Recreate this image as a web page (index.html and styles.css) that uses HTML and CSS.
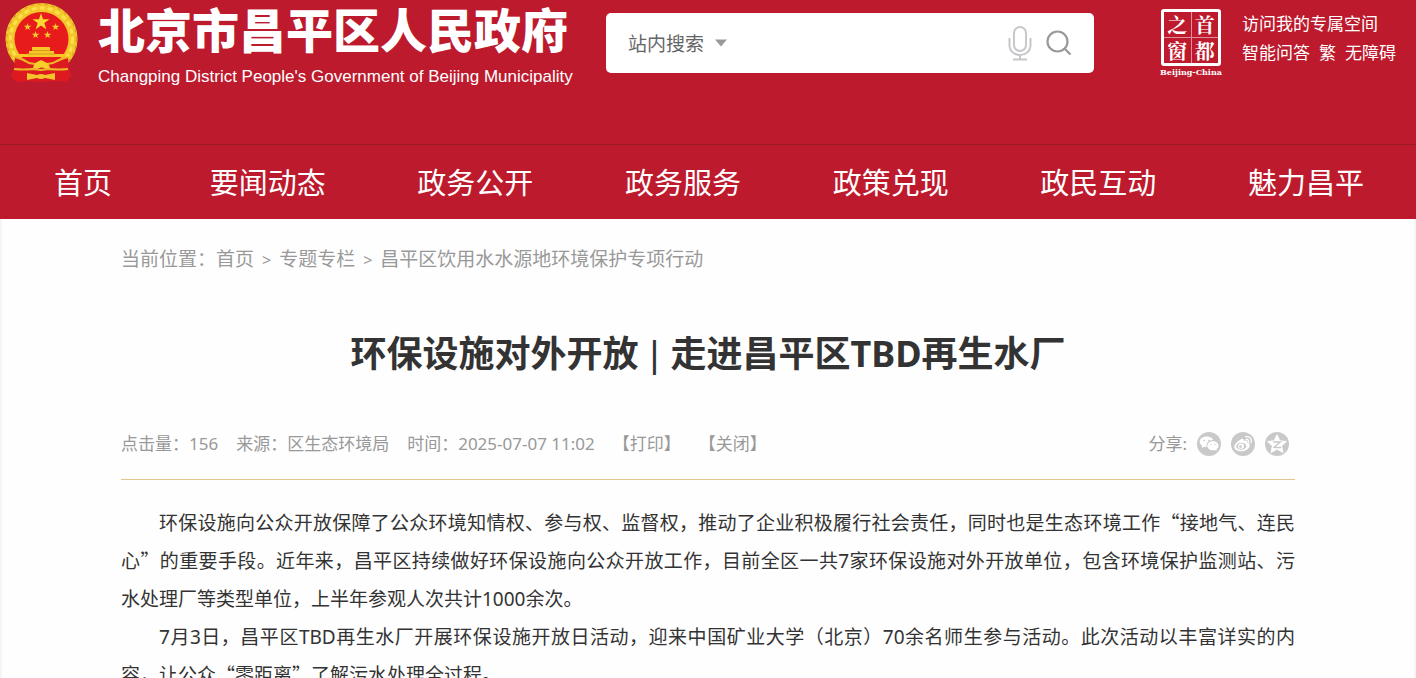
FILE: index.html
```html
<!DOCTYPE html>
<html lang="zh-CN">
<head>
<meta charset="utf-8">
<title>环保设施对外开放 | 走进昌平区TBD再生水厂</title>
<link rel="stylesheet" href="styles.css">
</head>
<body>
<header class="site-header">
  <div class="top">
    <a class="brand" href="#">
      <svg class="emblem" viewBox="0 0 74 82" aria-hidden="true">
        <circle cx="36.500" cy="37" r="30.500" fill="none" stroke="#f3c62a" stroke-width="11"/>
        <circle cx="36.500" cy="37" r="31" fill="none" stroke="#fbe04a" stroke-width="3" stroke-dasharray="5 3"/>
        <circle cx="36.500" cy="37" r="35" fill="none" stroke="#d9a324" stroke-width="1.500" stroke-dasharray="3 4"/>
        <circle cx="36.500" cy="37" r="27" fill="#e81b1c"/>
        <path d="M36 11l2 6.200h6.500l-5.200 3.800 2 6.200-5.300-3.800-5.300 3.800 2-6.200-5.200-3.800h6.500z" fill="#f9d92f"/>
        <g fill="#f5cc2c">
          <path id="star" d="M22.500 21l.9 2.700h2.900l-2.300 1.700.9 2.700-2.400-1.700-2.300 1.700.9-2.700-2.300-1.700h2.800z"/>
          <use href="#star" x="28"/><use href="#star" x="8" y="8"/><use href="#star" x="20" y="8"/>
        </g>
        <path d="M27 45h18v4h4v3h10v3H13v-3h11v-3h3z" fill="#f6c726"/>
        <path d="M27 48.500h18M22 52h28" stroke="#d89a1c"/>
        <path d="M10 56q8-1 14 4l12 2 12-2q6-5 15-4l1 10 2 8-5 6-12-1-13 1-13-1-12 1-5-6 3-8z" fill="#dc1a20"/>
        <path d="M10 55q8 2 14 6l12 2 12-2q7-4 15-6M9 67q9 1 19 0l8 1 8-1q10 1 19 0" fill="none" stroke="#edb626" stroke-width="2"/>
        <path d="M28 66q1-5 4-6l4-2 4 2q4 1 5 6l-4 1q-4-3-9 0z" fill="#f6cf2b"/>
        <path d="M22 71l10 2q4-2 8 0l10-2v7l-10-2q-4 2-8 0l-10 2z" fill="#f3c52a"/>
      </svg>
      <span class="brand-text">
        <span class="brand-cn">北京市昌平区人民政府</span>
        <span class="brand-en">Changping District People's Government of Beijing Municipality</span>
      </span>
    </a>
    <form class="search">
      <label class="scope">
        <select aria-label="搜索范围"><option>站内搜索</option></select>
        <svg width="14" height="8" viewBox="0 0 14 8" aria-hidden="true"><path d="M1 0.500h12L7 7.500z" fill="#999"/></svg>
      </label>
      <input type="text" aria-label="搜索内容">
      <button type="button" aria-label="语音输入">
        <svg width="24" height="36" viewBox="0 0 24 36" fill="none" stroke="#c8c8cc" stroke-width="2"><rect x="6" y="2" width="12" height="24" rx="6"/><path d="M1.500 13v7c0 13.300 21 13.300 21 0v-7M12 30v4M5 34.500h14"/></svg>
      </button>
      <button type="submit" aria-label="搜索">
        <svg width="26" height="26" viewBox="0 0 26 26" fill="none" stroke="#999" stroke-width="2.200"><circle cx="11.500" cy="11.500" r="10"/><path d="M18.500 18.500l6 6"/></svg>
      </button>
    </form>
    <a class="seal" href="#">
      <span class="seal-box"><span>之</span><span>首</span><span>窗</span><span>都</span></span>
      <span class="seal-en">Beijing-China</span>
    </a>
    <div class="tools">
      <div><a href="#">访问我的专属空间</a></div>
      <div class="tool-row"><a href="#">智能问答</a><a href="#">繁</a><a href="#">无障碍</a></div>
    </div>
  </div>
  <nav class="nav">
    <a class="home" href="#">首页</a><a href="#">要闻动态</a><a href="#">政务公开</a><a href="#">政务服务</a><a href="#">政策兑现</a><a href="#">政民互动</a><a href="#">魅力昌平</a>
  </nav>
</header>
<main class="page">
  <div class="crumbs">当前位置：<a href="#">首页</a><span class="sep">&gt;</span><a href="#">专题专栏</a><span class="sep">&gt;</span><a href="#">昌平区饮用水水源地环境保护专项行动</a></div>
  <h1>环保设施对外开放 <span class="bar">|</span> 走进昌平区TBD再生水厂</h1>
  <div class="meta">
    <span>点击量：156</span><span>来源：区生态环境局</span><span>时间：2025-07-07 11:02</span>
    <button type="button">【打印】</button><button type="button">【关闭】</button>
    <div class="share">
      <span>分享:</span>
      <a href="#" aria-label="微信"><svg viewBox="0 0 24 24"><circle cx="12" cy="12" r="12" fill="#c9c9c9"/><path d="M9.500 4.500c-4 0-6.800 2.300-6.800 5.200 0 1.700 1 3.200 2.500 4.100l-.6 2.200 2.600-1.300c.8.200 1.700.3 2.500.2-1-4.200 2.200-7 6.500-6.900-.7-2.200-3.300-3.500-6.700-3.500z" fill="#fff"/><path d="M16 9.300c-3.300 0-5.700 1.900-5.700 4.400s2.400 4.500 5.700 4.500l1.800-.3 2.100 1.200-.5-1.900c1.400-.8 2.200-2.100 2.200-3.500 0-2.500-2.500-4.400-5.600-4.400z" fill="#fff"/><g fill="#c9c9c9"><circle cx="7.200" cy="8.500" r=".8"/><circle cx="12" cy="8.500" r=".8"/><circle cx="14" cy="12.500" r=".7"/><circle cx="18" cy="12.500" r=".7"/></g></svg></a>
      <a href="#" aria-label="微博"><svg viewBox="0 0 24 24"><circle cx="12" cy="12" r="12" fill="#c9c9c9"/><path d="M10 7.200c1.500-.8 3-.5 2.700 1.600 2-.8 4.200-.5 3.700 1.700 5 1.600 2 8.700-6 8.700-8.500 0-9.300-6-3.200-10.300z" fill="#fff"/><ellipse cx="10.300" cy="14.200" rx="5" ry="3.500" fill="#c9c9c9"/><ellipse cx="10" cy="14.200" rx="3" ry="2.600" fill="#fff"/><circle cx="9.500" cy="14.600" r="1.300" fill="#c9c9c9"/><path d="M14.800 4.700c4-.8 6.500 2.500 5.300 6M15 7.500c2-.3 3.100 1 2.500 2.700" fill="none" stroke="#fff" stroke-width="1.300" stroke-linecap="round"/></svg></a>
      <a href="#" aria-label="QQ空间"><svg viewBox="0 0 24 24"><circle cx="12" cy="12" r="12" fill="#c9c9c9"/><path d="M12 2.800l2.800 6 6.600.7-4.900 4.400 1.500 6.600-6-3.400-6 3.400 1.500-6.600-4.900-4.400 6.600-.7z" fill="#fff" stroke="#fff" stroke-linejoin="round"/><path d="M8.300 10h7l-6 5.200c2 .5 4.500.5 6.700 0" fill="none" stroke="#c9c9c9" stroke-width="1.400"/></svg></a>
    </div>
  </div>
  <article class="article">
    <p><span class="full">环保设施向公众开放保障了公众环境知情权、参与权、监督权，推动了企业积极履行社会责任，同时也是生态环境工作<span class="quote">“</span>接地气、连民心<span class="quote">”</span>的重要手段。近年来，昌平区持续做好环保设施向公众开放工作，目前全区一共7家环保设施对外开放单位，包含环境保护监测站、污</span><span class="rest">水处理厂等类型单位，上半年参观人次共计1000余次。</span></p>
    <p>7月3日，昌平区TBD再生水厂开展环保设施开放日活动，迎来中国矿业大学（北京）70余名师生参与活动。此次活动以丰富详实的内容，让公众<span class="quote">“</span>零距离<span class="quote">”</span>了解污水处理全过程。</p>
  </article>
</main>
</body>
</html>
```
FILE: styles.css
```css
* { box-sizing: border-box; }
body {
  margin: 0;
  height: 100vh;
  overflow: hidden;
  background: #f5f5f5;
  color: #333;
  font-family: "Noto Sans", "Noto Sans CJK SC", sans-serif;
}
a { color: inherit; text-decoration: none; }
button { border: 0; padding: 0; background: none; color: inherit; font: inherit; cursor: pointer; }
.site-header { background: #bd1a2d; color: #fff; }
.top { display: flex; align-items: flex-start; height: 144px; padding-left: 5px; padding-right: 20px; }
.brand { display: flex; gap: 19px; width: 601px; flex: none; }
.emblem { width: 74px; height: 82px; margin-top: 2px; flex: none; }
.brand-text { display: flex; flex-direction: column; white-space: nowrap; }
.brand-cn { font: 900 47px/56px "Noto Sans CJK SC", sans-serif; }
.brand-en { font: 17px/42px "Liberation Sans", Arial, sans-serif; }
.search {
  display: flex;
  align-items: center;
  flex: 0 1 488px;
  height: 60px;
  margin-top: 13px;
  padding: 0 22px;
  border-radius: 5px;
  background: #fff;
}
.scope { display: flex; align-items: center; gap: 9px; color: #666; }
.scope select {
  appearance: none;
  border: 0;
  padding: 0;
  background: none;
  color: #666;
  font: 19px/28px "Noto Sans CJK SC", sans-serif;
}
.search input { flex: 1; min-width: 0; height: 40px; border: 0; outline: 0; font-size: 19px; }
.search button { display: flex; margin-left: 14px; }
.seal { display: flex; flex-direction: column; align-items: center; width: 68px; margin: 9px 0 0 auto; }
.seal-box {
  display: grid;
  grid-template-columns: 1fr 1fr;
  gap: 1px;
  width: 60px;
  border: 3px solid #fff;
  border-radius: 3px;
  background: #e0909a;
}
.seal-box span {
  background: #bd1a2d;
  text-align: center;
  font: 700 20px/25px "Noto Serif CJK SC", "Noto Sans CJK SC", serif;
}
.seal-en { font: 700 8px/12px "DejaVu Serif", serif; white-space: nowrap; }
.tools { margin: 9px 0 0 17px; font-size: 17px; line-height: 29px; white-space: nowrap; }
.tool-row { display: flex; gap: 9px; }
.nav {
  display: flex;
  justify-content: space-between;
  padding: 2px 52px 0 54px;
  border-top: 1px solid #981b28;
  font-size: 29px;
  line-height: 72px;
  white-space: nowrap;
}
.home { margin-right: 6px; }
.page { margin: 0 2px; padding: 0 119px; background: #fefefe; }
.crumbs { padding-top: 26px; color: #999; font-size: 19px; line-height: 28px; }
.sep { margin: 0 8px; font-size: 16px; }
h1 { margin: 52px 0 0; font-size: 36px; line-height: 56px; text-align: center; }
.bar { padding: 0 2px; font-family: "Liberation Sans", sans-serif; font-weight: 400; }
.meta {
  display: flex;
  align-items: center;
  gap: 18px;
  margin-top: 46px;
  padding-bottom: 20px;
  border-bottom: 1px solid #e6c48f;
  color: #999;
  font-size: 17px;
  line-height: 30px;
  white-space: nowrap;
}
.share { display: flex; align-items: center; gap: 10px; margin-left: auto; padding-right: 6px; }
.share svg { display: block; width: 24px; height: 24px; }
.article { padding-top: 24px; font-size: 19px; line-height: 38px; text-align: justify; }
.article p { margin: 0; text-indent: 2em; }
.full { display: block; text-align-last: justify; }
.rest { display: block; text-indent: 0; }
.quote { font-family: "Noto Sans CJK SC", sans-serif; line-height: 20px; }
```
